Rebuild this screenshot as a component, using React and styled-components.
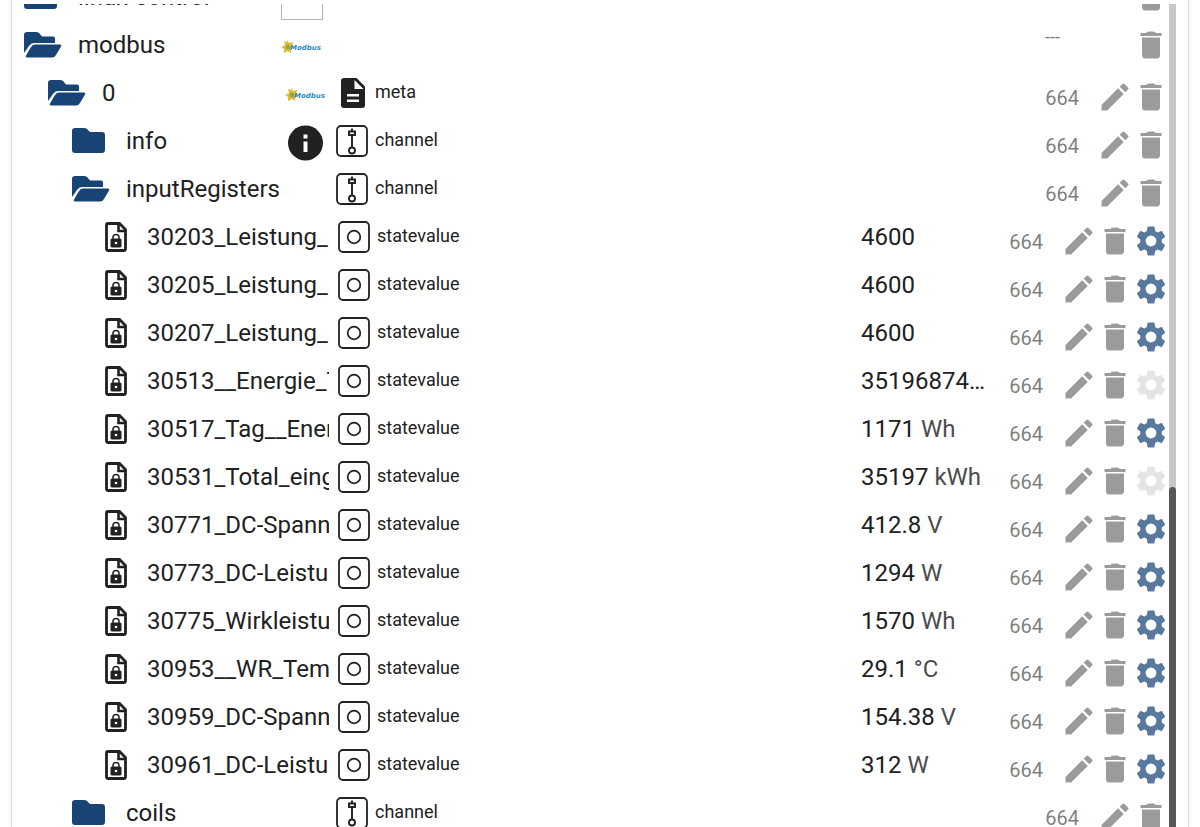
import React from "react";
import styled, { createGlobalStyle, css } from "styled-components";

const GlobalStyle = createGlobalStyle`
  * {
    box-sizing: border-box;
  }
  body {
    margin: 0;
    background: #fff;
    color: #212121;
    font-family: Roboto, "Noto Sans", sans-serif;
  }
`;

const Page = styled.div`
  height: 100vh;
  padding: 0 11px;
  overflow: hidden;
`;

const Panel = styled.main`
  display: flex;
  height: 100%;
  padding: 4px 12px 0 0;
  border-left: 1px solid #e2e2e2;
  border-right: 1px solid #e2e2e2;
  box-shadow: 0 0 3px rgba(0, 0, 0, 0.12);
`;

const Viewport = styled.div`
  flex: 1;
  min-width: 0;
  overflow: hidden;
`;

const Track = styled.div`
  display: flex;
  flex-direction: column;
  justify-content: flex-end;
  width: 7px;
  background: #c8c8c8;
`;

const Thumb = styled.div`
  height: 41.3%;
  border-radius: 4px 4px 0 0;
  background: #575757;
`;

const List = styled.ul`
  margin: -31px 0 0;
  padding: 0;
  list-style: none;
`;

const Row = styled.li`
  display: flex;
  align-items: center;
  height: 48px;
`;

const NameCell = styled.div`
  display: flex;
  align-items: center;
  flex: none;
  width: 317px;
  padding-left: ${(p) => 12 + p.$level * 24}px;
`;

const ToggleButton = styled.button`
  display: flex;
  flex: none;
  width: 42px;
  margin-right: 12px;
  padding: 0;
  border: 0;
  background: none;
  color: #174475;
  cursor: pointer;
`;

const FileMark = styled.span`
  display: flex;
  flex: none;
  width: 51px;
  padding-left: 8px;
`;

const Name = styled.span`
  flex: 1;
  min-width: 0;
  overflow: hidden;
  font-size: 24px;
  line-height: 32px;
  white-space: nowrap;
`;

const Thumbnail = styled.span`
  display: flex;
  flex: none;
  padding: 4px ${(p) => (p.$nested ? 2 : 6)}px 0 0;
`;

const BlankImage = styled.span`
  width: 42px;
  height: 42px;
  border: 1px solid #b4b4b4;
`;

const TypeCell = styled.div`
  display: flex;
  align-items: center;
  flex: 1;
  gap: 7px;
  min-width: 0;
  padding-left: ${(p) => (p.$state ? 9 : 7)}px;
  font-size: 18px;
  line-height: 24px;
`;

const TypeLabel = styled.span`
  padding-bottom: 2px;
`;

const ValueCell = styled.div`
  flex: none;
  width: 128px;
  overflow: hidden;
  font-size: 24px;
  line-height: 32px;
  text-overflow: ellipsis;
  white-space: nowrap;
`;

const Unit = styled.span`
  color: #4d4d4d;
`;

const Actions = styled.div`
  display: flex;
  flex: none;
  align-items: center;
  justify-content: flex-end;
  width: 180px;
  padding-top: ${(p) => (p.$raised ? 0 : 8)}px;
`;

const mutedText = css`
  color: #808080;
  font-size: 20px;
  line-height: 24px;
`;

const AclButton = styled.button`
  ${mutedText}
  padding: 2px 0 0;
  margin-right: 18px;
  border: 0;
  background: none;
  font-family: inherit;
  cursor: pointer;
`;

const NoAcl = styled.span`
  ${mutedText}
  margin-right: 73px;
  padding-bottom: 16px;
  font-size: 18px;
`;

const IconButton = styled.button`
  display: flex;
  justify-content: center;
  width: 36px;
  padding: 0;
  border: 0;
  background: none;
  color: ${(p) => p.$color || "#9b9b9b"};
  cursor: pointer;
`;

const FolderOpen = () => (
  <svg width="38" height="26" viewBox="0 0 38 26" fill="currentColor">
    <path d="M0 21V3Q0 0 3 0h9q2 0 3 1l3 3.500h11q2 0 2 2v4.500H10q-3 0-5 3Z" />
    <path d="M10.500 12.500H35.500q2.500 0 1.500 2l-5 8.500q-1.500 2.500-4 2.500H3.500q-2.500 0-1.500-2l5-8.500q1.500-2.500 3.500-2.500Z" />
  </svg>
);

const FolderClosed = () => (
  <svg width="38" height="26" viewBox="0 0 38 26" fill="currentColor">
    <path d="M3 0h9q2 0 3 1l3 3h12q3 0 3 3v15q0 3-3 3H3q-3 0-3-3V3Q0 0 3 0Z" />
  </svg>
);

const LockedFile = () => (
  <svg width="24" height="32" viewBox="0 0 24 32" fill="none" stroke="#212121">
    <path d="M4 2.500h11.500l6 6V28a1.500 1.500 0 0 1-1.500 1.500H4A1.500 1.500 0 0 1 2.500 28V4A1.500 1.500 0 0 1 4 2.500Z" strokeWidth="2.800" />
    <path d="M14.500 3v7H21.500" strokeWidth="2.600" />
    <path d="M9 18v-1.500a3 3 0 0 1 6 0V18" strokeWidth="1.500" />
    <rect x="6.500" y="17.500" width="11" height="9" rx="1.500" fill="#212121" stroke="none" />
    <circle cx="12" cy="22" r="1.300" fill="#fff" stroke="none" />
  </svg>
);

const InfoMark = () => (
  <svg width="36" height="36" viewBox="0 0 36 36">
    <circle cx="18.500" cy="18" r="17.500" fill="#212121" />
    <path d="M16.500 9.500h4v4h-4zM16.500 16.500h4V27h-4z" fill="#fff" />
  </svg>
);

const ModbusLogo = () => (
  <svg width="42" height="14" viewBox="0 0 42 14">
    <path d="M6 0l2 3 4-1-1 4 3 2-4 1 0 4-3-2-4 2 0-4-3-2 4-2-1-4 3 1Z" fill="#dcc034" />
    <circle cx="7" cy="7" r="2.500" fill="#a3a035" />
    <text x="9" y="10" fill="#2f8fc0" fontFamily="DejaVu Sans, sans-serif" fontSize="7" fontWeight="700" fontStyle="italic">
      Modbus
    </text>
  </svg>
);

const MetaIcon = () => (
  <svg width="32" height="32" viewBox="0 0 32 32">
    <path d="M8 1h12.500L29 9.500V28a3 3 0 0 1-3 3H8a3 3 0 0 1-3-3V4a3 3 0 0 1 3-3Z" fill="#212121" />
    <path d="M18.500 3v9H27.500ZM11 17h12v2.500H11zM11 22.500h12V25H11z" fill="#fff" />
  </svg>
);

const ChannelIcon = () => (
  <svg width="32" height="32" viewBox="0 0 32 32" fill="none" stroke="#212121">
    <rect x="1" y="1" width="30" height="30" rx="4" strokeWidth="1.800" />
    <path d="M16 3.500V7M16 10v12M13 6.500h6v3.500h-6z" strokeWidth="1.900" />
    <circle cx="16" cy="25.500" r="3" strokeWidth="1.900" />
  </svg>
);

const StateIcon = () => (
  <svg width="32" height="32" viewBox="0 0 32 32" fill="none" stroke="#212121">
    <rect x="1" y="1" width="30" height="30" rx="4" strokeWidth="1.800" />
    <circle cx="16" cy="16" r="6.300" strokeWidth="1.700" />
  </svg>
);

const PencilIcon = () => (
  <svg width="36" height="36" viewBox="0 0 24 24" fill="currentColor">
    <path d="M3 17.250V21h3.750L17.810 9.940l-3.750-3.750L3 17.250zM20.710 7.040a1 1 0 0 0 0-1.410l-2.340-2.340a1 1 0 0 0-1.410 0l-1.830 1.830 3.750 3.750 1.830-1.830z" />
  </svg>
);

const TrashIcon = () => (
  <svg width="36" height="36" viewBox="0 0 36 36" fill="currentColor">
    <path d="M7.500 6h5.500q1-1.500 3-1.500h4q2 0 3 1.500h5.500v3h-21zM9 10.500h18V28q0 3.500-3.500 3.500h-11Q9 31.500 9 28Z" />
  </svg>
);

const GearIcon = () => (
  <svg width="36" height="36" viewBox="0 0 24 24" fill="currentColor">
    <path d="M19.140 12.940c.04-.3.06-.61.06-.94 0-.32-.02-.64-.07-.94l2.030-1.580a.49.49 0 0 0 .12-.61l-1.920-3.320a.488.488 0 0 0-.59-.22l-2.390.96c-.5-.38-1.030-.7-1.620-.94l-.36-2.540a.484.484 0 0 0-.48-.41h-3.840c-.24 0-.43.17-.47.41l-.36 2.540c-.59.24-1.130.57-1.620.94l-2.390-.96c-.22-.08-.47 0-.59.22L2.740 8.870c-.12.21-.08.47.12.61l2.030 1.580c-.05.3-.09.63-.09.94s.02.64.07.94l-2.030 1.580a.49.49 0 0 0-.12.61l1.920 3.320c.12.22.37.29.59.22l2.390-.96c.5.38 1.030.7 1.620.94l.36 2.540c.05.24.24.41.48.41h3.840c.24 0 .44-.17.47-.41l.36-2.540c.59-.24 1.130-.56 1.620-.94l2.390.96c.22.08.47 0 .59-.22l1.920-3.320c.12-.22.07-.47-.12-.61l-2.010-1.580zM12 15.600A3.600 3.600 0 1 1 12 8.400a3.600 3.600 0 0 1 0 7.200z" />
  </svg>
);

const typeIcons = {
  meta: MetaIcon,
  channel: ChannelIcon,
  statevalue: StateIcon,
};

const thumbnails = {
  blank: BlankImage,
  modbus: ModbusLogo,
  info: InfoMark,
};

const state = (name, value, unit, custom = true) => ({
  level: 3,
  name,
  type: "statevalue",
  value,
  unit,
  custom,
});

const objects = [
  { level: 0, name: "linux-control", image: "blank" },
  { level: 0, name: "modbus", open: true, image: "modbus" },
  { level: 1, name: "0", open: true, image: "modbus", type: "meta" },
  { level: 2, name: "info", image: "info", type: "channel" },
  { level: 2, name: "inputRegisters", open: true, type: "channel" },
  state("30203_Leistung_", "4600"),
  state("30205_Leistung_", "4600"),
  state("30207_Leistung_", "4600"),
  state("30513__Energie_T", "35196874", "Wh", false),
  state("30517_Tag__Ener", "1171", "Wh"),
  state("30531_Total_eing", "35197", "kWh", false),
  state("30771_DC-Spann", "412.8", "V"),
  state("30773_DC-Leistu", "1294", "W"),
  state("30775_Wirkleistu", "1570", "Wh"),
  state("30953__WR_Tem", "29.1", "°C"),
  state("30959_DC-Spann", "154.38", "V"),
  state("30961_DC-Leistu", "312", "W"),
  { level: 2, name: "coils", type: "channel" },
];

const ObjectRow = ({ item }) => {
  const isState = item.type === "statevalue";
  const TypeIcon = typeIcons[item.type];
  const Image = thumbnails[item.image];
  return (
    <Row>
      <NameCell $level={item.level}>
        {isState ? (
          <FileMark>
            <LockedFile />
          </FileMark>
        ) : (
          <ToggleButton aria-label={`Toggle ${item.name}`} aria-expanded={!!item.open}>
            {item.open ? <FolderOpen /> : <FolderClosed />}
          </ToggleButton>
        )}
        <Name>{item.name}</Name>
        {Image && (
          <Thumbnail $nested={item.level === 1}>
            <Image />
          </Thumbnail>
        )}
      </NameCell>
      <TypeCell $state={isState}>
        {TypeIcon && <TypeIcon />}
        <TypeLabel>{item.type}</TypeLabel>
      </TypeCell>
      {isState && (
        <ValueCell>
          {item.value} {item.unit && <Unit>{item.unit}</Unit>}
        </ValueCell>
      )}
      <Actions $raised={!item.type}>
        {item.type ? <AclButton>664</AclButton> : <NoAcl>---</NoAcl>}
        {item.type && (
          <IconButton aria-label="Edit">
            <PencilIcon />
          </IconButton>
        )}
        <IconButton aria-label="Delete">
          <TrashIcon />
        </IconButton>
        {isState && (
          <IconButton aria-label="Custom settings" $color={item.custom ? "#58789f" : "#e4e4e4"}>
            <GearIcon />
          </IconButton>
        )}
      </Actions>
    </Row>
  );
};

const App = () => {
  return (
    <Page>
      <GlobalStyle />
      <Panel>
        <Viewport>
          <List>
            {objects.map((item) => (
              <ObjectRow key={item.name} item={item} />
            ))}
          </List>
        </Viewport>
        <Track>
          <Thumb />
        </Track>
      </Panel>
    </Page>
  );
};

export default App;
